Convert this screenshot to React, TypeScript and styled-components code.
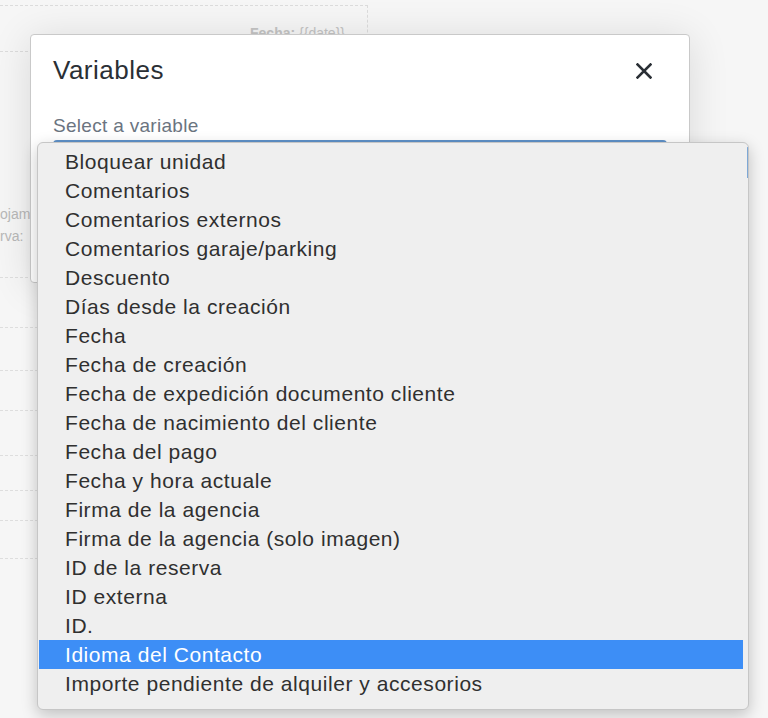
import React from "react";
import styled, { createGlobalStyle } from "styled-components";

const GlobalStyle = createGlobalStyle`
  html, body {
    margin: 0;
    padding: 0;
    background: #f5f5f5;
    font-family: "Liberation Sans", Arial, sans-serif;
  }
`;

const Page = styled.div`
  position: relative;
  width: 768px;
  height: 718px;
  overflow: hidden;
  background: #f6f6f6;
`;

const Doc = styled.div`
  display: flex;
  flex-direction: column;
  width: 368px;
  padding-top: 5px;
`;

const TopBox = styled.div`
  height: 47px;
  border-top: 1px dashed #dcdcdc;
  border-right: 1px dashed #dcdcdc;
  border-bottom: 1px dashed #dcdcdc;
  display: flex;
  align-items: flex-end;
  justify-content: flex-end;
  padding-right: 22px;
  box-sizing: border-box;
`;

const DateText = styled.span`
  font-size: 14px;
  color: #c4c4c4;
  line-height: 20px;
  margin-bottom: 8px;
  b {
    font-weight: 700;
  }
`;

const InfoBlock = styled.div`
  margin-top: 151px;
  display: flex;
  flex-direction: column;
`;

const InfoLine = styled.div`
  font-size: 14px;
  line-height: 22px;
  color: #b9b9b9;
  white-space: nowrap;
`;

const Rule = styled.div<{ $h: number }>`
  height: ${(p) => p.$h}px;
  border-bottom: 1px dashed #dedede;
  box-sizing: border-box;
`;

const Modal = styled.div`
  position: absolute;
  top: 34px;
  left: 30px;
  width: 660px;
  height: 249px;
  background: #fff;
  border: 1px solid #c9c9c9;
  border-radius: 4px;
  box-sizing: border-box;
  box-shadow: 0 4px 40px rgba(0, 0, 0, 0.12);
  display: flex;
  flex-direction: column;
`;

const ModalHeader = styled.div`
  height: 71px;
  display: flex;
  align-items: center;
  justify-content: space-between;
  padding: 0 37px 0 22px;
`;

const Title = styled.h2`
  margin: 0;
  font-size: 26px;
  font-weight: 400;
  color: #2a2f35;
  letter-spacing: 0.5px;
`;

const CloseButton = styled.button`
  border: 0;
  background: transparent;
  padding: 0;
  width: 16px;
  height: 16px;
  display: flex;
  align-items: center;
  justify-content: center;
  cursor: pointer;
`;

const ModalBody = styled.div`
  padding: 0 22px;
  display: flex;
  flex-direction: column;
`;

const Label = styled.label`
  margin-top: 9px;
  font-size: 19px;
  line-height: 22px;
  color: #6b7480;
  letter-spacing: 0.3px;
`;

const SelectBox = styled.div`
  margin-top: 3px;
  height: 38px;
  border: 1px solid #80a9d6;
  border-top: 2px solid #5f92c9;
  border-radius: 4px;
  background: #fff;
`;

const Dropdown = styled.ul`
  position: absolute;
  top: 142px;
  left: 37px;
  width: 712px;
  height: 568px;
  margin: 0;
  padding: 4px 0 0;
  list-style: none;
  box-sizing: border-box;
  background: #efefef;
  border: 1px solid #c6c6c6;
  border-radius: 6px;
  box-shadow: 0 5px 16px rgba(0, 0, 0, 0.22);
  overflow: hidden;
`;

const EdgeAccent = styled.span`
  position: absolute;
  top: 4px;
  right: -1px;
  width: 2px;
  height: 31px;
  background: #7ea8d6;
`;

const Item = styled.li<{ $active?: boolean }>`
  height: 29px;
  margin: 0 5px 0 1px;
  padding-left: 26px;
  display: flex;
  align-items: center;
  font-size: 21px;
  letter-spacing: 0.55px;
  white-space: nowrap;
  color: ${(p) => (p.$active ? "#ffffff" : "#303030")};
  background: ${(p) => (p.$active ? "#3d8ef6" : "transparent")};
`;

const items = [
  "Bloquear unidad",
  "Comentarios",
  "Comentarios externos",
  "Comentarios garaje/parking",
  "Descuento",
  "Días desde la creación",
  "Fecha",
  "Fecha de creación",
  "Fecha de expedición documento cliente",
  "Fecha de nacimiento del cliente",
  "Fecha del pago",
  "Fecha y hora actuale",
  "Firma de la agencia",
  "Firma de la agencia (solo imagen)",
  "ID de la reserva",
  "ID externa",
  "ID.",
  "Idioma del Contacto",
  "Importe pendiente de alquiler y accesorios",
];

const rules = [31, 50, 43, 40, 45, 35, 30, 38];

export default function App() {
  return (
    <Page>
      <GlobalStyle />
      <Doc>
        <TopBox>
          <DateText>
            <b>Fecha:</b> {"{{date}}"}
          </DateText>
        </TopBox>
        <InfoBlock>
          <InfoLine>ojam</InfoLine>
          <InfoLine>rva:</InfoLine>
        </InfoBlock>
        {rules.map((h, i) => (
          <Rule key={i} $h={h} />
        ))}
      </Doc>

      <Modal>
        <ModalHeader>
          <Title>Variables</Title>
          <CloseButton aria-label="Close">
            <svg width="16" height="16" viewBox="0 0 16 16">
              <path
                d="M1.5 1.5 L14.5 14.5 M14.5 1.5 L1.5 14.5"
                stroke="#2a2f35"
                strokeWidth="2.6"
                strokeLinecap="square"
              />
            </svg>
          </CloseButton>
        </ModalHeader>
        <ModalBody>
          <Label>Select a variable</Label>
          <SelectBox />
        </ModalBody>
      </Modal>

      <Dropdown>
        <EdgeAccent />
        {items.map((t) => (
          <Item key={t} $active={t === "Idioma del Contacto"}>
            {t}
          </Item>
        ))}
      </Dropdown>
    </Page>
  );
}
